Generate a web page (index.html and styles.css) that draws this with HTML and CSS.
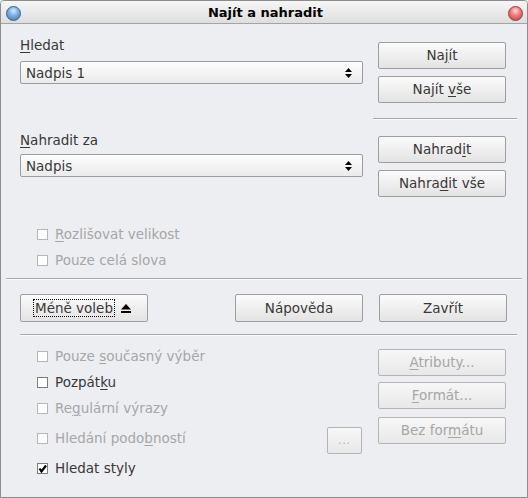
FILE: index.html
```html
<!DOCTYPE html>
<html lang="cs">
<head>
    <meta charset="UTF-8">
    <title>Najít a nahradit</title>
    <link rel="stylesheet" href="styles.css">
</head>
<body>

    <div class="window">
        <!-- Title bar -->
        <div class="titlebar">
            <span class="orb orb-blue"></span>
            <span class="title">Najít a nahradit</span>
            <span class="orb orb-red"></span>
        </div>

        <div class="content">

            <!-- Search -->
            <div class="row row-search">
                <div class="left-col">
                    <div class="label"><u>H</u>ledat</div>
                    <div class="combo">
                        <span>Nadpis 1</span>
                        <svg class="spin" width="7" height="10" viewBox="0 0 7 10"><polygon points="0,4 3.5,0 7,4"/><polygon points="0,6 3.5,10 7,6"/></svg>
                    </div>
                </div>
                <div class="right-col pad-search">
                    <div class="btn">Na<u>j</u>ít</div>
                    <div class="btn">Najít <u>v</u>še</div>
                </div>
            </div>

            <div class="sep sep-short"></div>

            <!-- Replace -->
            <div class="row row-replace">
                <div class="left-col">
                    <div class="label"><u>N</u>ahradit za</div>
                    <div class="combo combo-replace">
                        <span>Nadpis</span>
                        <svg class="spin" width="7" height="10" viewBox="0 0 7 10"><polygon points="0,4 3.5,0 7,4"/><polygon points="0,6 3.5,10 7,6"/></svg>
                    </div>
                </div>
                <div class="right-col pad-replace">
                    <div class="btn">Nahrad<u>i</u>t</div>
                    <div class="btn">Nahra<u>d</u>it vše</div>
                </div>
            </div>

            <div class="checks checks-top">
                <div class="check disabled"><span class="box"></span><span><u>R</u>ozlišovat velikost</span></div>
                <div class="check disabled"><span class="box"></span><span>Pouze celá slova</span></div>
            </div>

            <div class="sep sep-full"></div>

            <!-- Dialog buttons -->
            <div class="button-row">
                <div class="btn btn-more">
                    <span class="focus">Méně voleb</span>
                    <svg width="10" height="9" viewBox="0 0 10 9"><polygon points="0,5.5 5,0 10,5.5"/><rect x="0" y="7" width="10" height="2"/></svg>
                </div>
                <div class="btn btn-help">Nápověda</div>
                <div class="btn">Zavřít</div>
            </div>

            <div class="sep sep-mid"></div>

            <!-- More options -->
            <div class="row row-options">
                <div class="left-col">
                    <div class="check disabled"><span class="box"></span><span>Pouze <u>s</u>oučasný výběr</span></div>
                    <div class="check"><span class="box"></span><span>Pozpát<u>k</u>u</span></div>
                    <div class="check disabled"><span class="box"></span><span>Re<u>g</u>ulární výrazy</span></div>
                    <div class="check disabled tall">
                        <span class="box"></span><span>Hledání podo<u>b</u>ností</span>
                        <div class="btn btn-dots disabled">...</div>
                    </div>
                    <div class="check">
                        <span class="box checked"><svg width="9" height="9" viewBox="0 0 9 9"><polyline points="1.5,4.5 3.5,7.5 8,1.5"/></svg></span>
                        <span>Hledat styly</span>
                    </div>
                </div>
                <div class="right-col pad-options">
                    <div class="btn disabled"><u>A</u>tributy...</div>
                    <div class="btn disabled"><u>F</u>ormát...</div>
                    <div class="btn disabled btn-last">Bez for<u>m</u>átu</div>
                </div>
            </div>

        </div>
    </div>

</body>
</html>
```

FILE: styles.css
```css
body {
    margin: 0;
    background-color: #edeef2;
    font-family: "DejaVu Sans", sans-serif;
    font-size: 13.5px;
    color: #383838;
}

u {
    text-decoration: underline;
    text-underline-offset: 2px;
}

/* Window frame */
.window {
    width: 528px;
    height: 498px;
    box-sizing: border-box;
    border: 1px solid #8c8c8c;
    border-radius: 4px 4px 0 0;
    background-color: #edeef2;
    overflow: hidden;
}

.titlebar {
    height: 22px;
    border-bottom: 1px solid #a4a4a4;
    background: linear-gradient(#f6f6f6, #dedede);
    display: flex;
    align-items: center;
    justify-content: space-between;
    padding: 0 4px 0 5px;
}

.title {
    font-weight: bold;
    font-size: 13px;
    color: #000;
    padding-left: 2px;
}

.orb {
    width: 13px;
    height: 13px;
    border-radius: 50%;
    margin-top: 2px;
}

.orb-blue {
    border: 1px solid #3f5f86;
    background: radial-gradient(circle at 50% 30%, #d6ecff 0%, #7fb2e6 40%, #3b74b8 100%);
}

.orb-red {
    border: 1px solid #9a3a3a;
    background: radial-gradient(circle at 50% 30%, #ffd9d9 0%, #ec8080 40%, #c93a3a 100%);
}

.content {
    padding: 0 20px 0 19px;
}

/* Two column rows */
.row {
    display: flex;
    gap: 15px;
}

.left-col {
    width: 343px;
    display: flex;
    flex-direction: column;
}

.right-col {
    width: 128px;
    display: flex;
    flex-direction: column;
    gap: 7px;
}

.row-search {
    margin-top: 13px;
}

.pad-search {
    padding-top: 5px;
}

.row-replace {
    margin-top: 12px;
}

.pad-replace {
    padding-top: 4px;
}

.label {
    line-height: 16px;
}

.combo {
    height: 21px;
    margin-top: 8px;
    border: 1px solid #9c9c9c;
    border-radius: 2px;
    background: linear-gradient(#fdfdfd, #ebebeb);
    display: flex;
    align-items: center;
    justify-content: space-between;
    padding: 0 10px 0 5px;
}

.combo-replace {
    margin-top: 6px;
}

.spin {
    fill: #000;
}

/* Buttons */
.btn {
    height: 25px;
    line-height: 25px;
    border: 1px solid #9e9e9e;
    border-radius: 2px;
    background: linear-gradient(#fbfbfb, #e3e3e3);
    text-align: center;
    white-space: nowrap;
}

.btn.disabled {
    color: #a6a6a6;
    border-color: #b4b4b4;
    background: linear-gradient(#f7f7f7, #e8e8e8);
}

/* Separators */
.sep {
    border-top: 1px solid #a9a9a9;
    border-bottom: 1px solid #fbfbfb;
}

.sep-short {
    margin: 15px -10px 0 auto;
    width: 144px;
}

.sep-full {
    margin: 5px -15px 0 -14px;
}

.sep-mid {
    margin: 12px -10px 0 0;
}

/* Checkboxes */
.checks-top {
    margin-top: 24px;
}

.check {
    height: 26px;
    display: flex;
    align-items: center;
    padding-left: 17px;
}

.check.tall {
    height: 34px;
}

.check.disabled {
    color: #a6a6a6;
}

.box {
    width: 9px;
    height: 9px;
    border: 1px solid #7c7c7c;
    background-color: #fff;
    margin-right: 7px;
    display: flex;
}

.check.disabled .box {
    border-color: #b6b6b6;
}

.box polyline {
    fill: none;
    stroke: #000;
    stroke-width: 2.2;
}

/* Bottom dialog buttons */
.button-row {
    display: flex;
    gap: 16px;
    margin-top: 14px;
}

.button-row .btn {
    width: 126px;
    height: 26px;
    line-height: 26px;
}

.btn-more {
    display: flex;
    align-items: center;
    padding-left: 13px;
    width: 113px !important;
}

.focus {
    outline: 1px dotted #000;
    padding: 0 1px;
    margin-right: 7px;
    line-height: 16px;
}

.btn-help {
    margin-left: auto;
}

/* More options */
.row-options {
    margin-top: 7px;
}

.pad-options {
    padding-top: 6px;
    gap: 6px;
}

.btn-last {
    margin-top: 2px;
}

.btn-dots {
    width: 33px;
    margin-left: auto;
    margin-right: 1px;
    align-self: flex-start;
    margin-top: 6px;
    font-size: 10px;
    letter-spacing: 1px;
}
```
